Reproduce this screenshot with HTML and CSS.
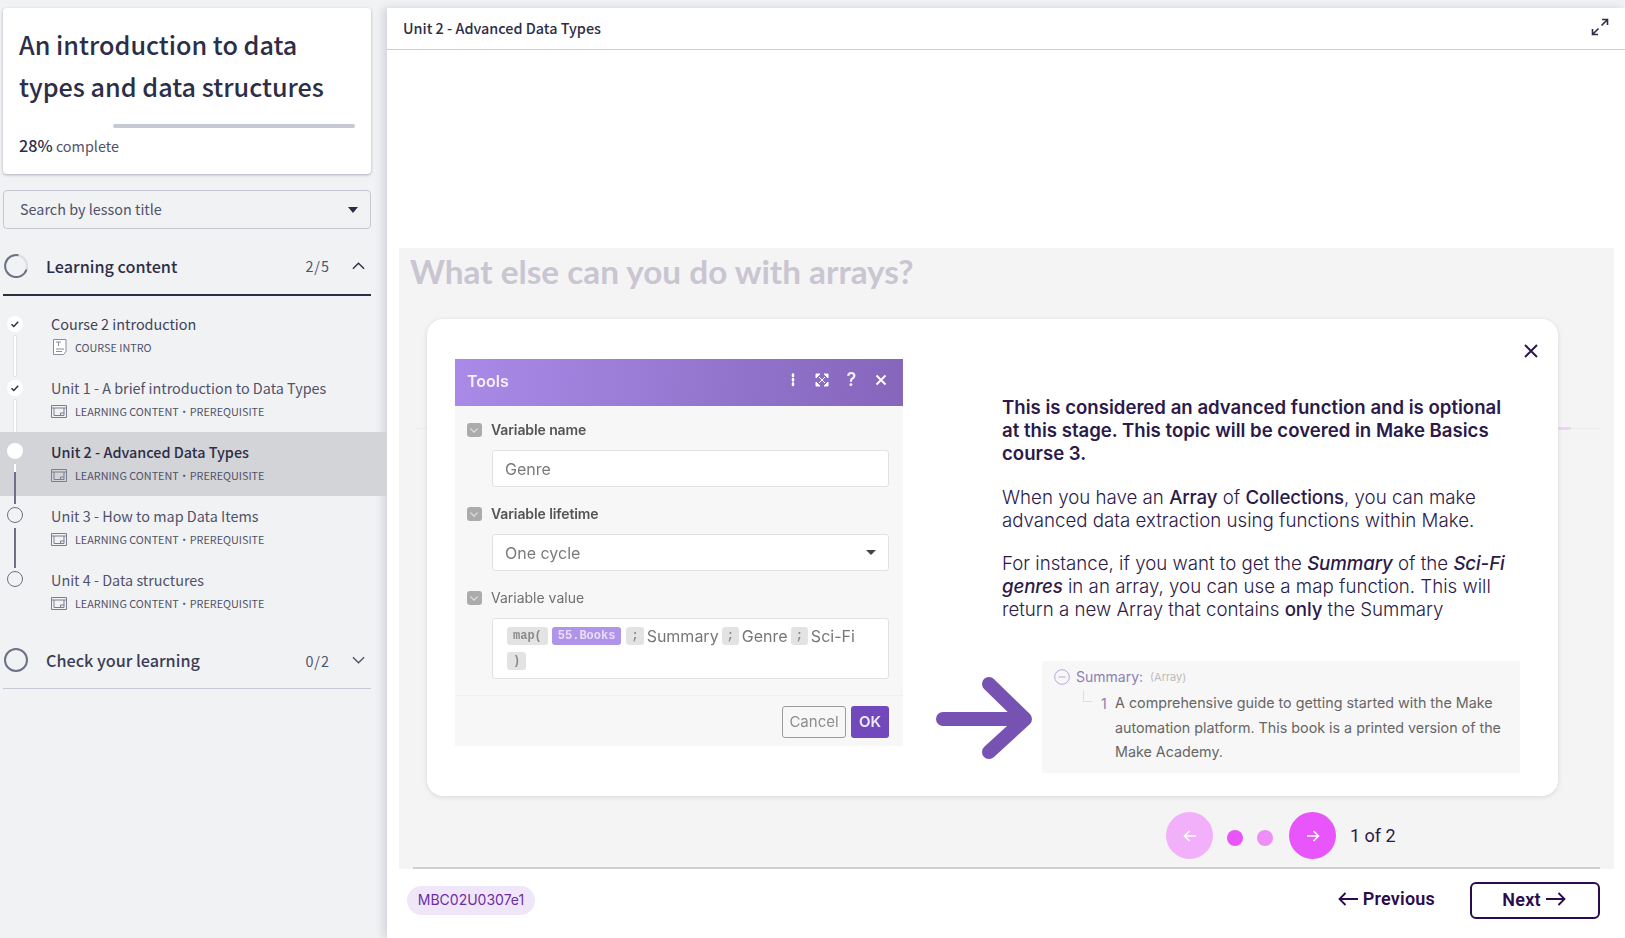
FILE: index.html
```html
<!DOCTYPE html>
<html lang="en">
<head>
<meta charset="utf-8">
<title>Unit 2 - Advanced Data Types</title>
<link rel="stylesheet" href="styles.css">
</head>
<body>
<aside class="sidebar">
  <section class="course-card">
    <h1 class="course-title">An introduction to data types and data structures</h1>
    <div class="progress"><span class="progress-bar"></span></div>
    <p class="progress-text"><span class="progress-num">28%</span> complete</p>
  </section>
  <div class="search"><span>Search by lesson title</span><span class="caret"></span></div>

  <div class="section-head open">
    <svg class="ring" viewBox="0 0 24 24"><circle cx="12" cy="12" r="11" fill="none" stroke="#dcdde3" stroke-width="2"/><path d="M14.5 1.3A11 11 0 1 0 22.6 15.5" fill="none" stroke="#6e7087" stroke-width="2"/></svg>
    <span class="section-name">Learning content</span>
    <span class="section-count">2/5</span>
    <svg class="chev" viewBox="0 0 14 8"><path d="M1 7l6-6 6 6" fill="none" stroke="#2c2e47" stroke-width="1.5"/></svg>
  </div>

  <ul class="lessons">
    <li class="lesson done">
      <span class="marker"><svg viewBox="0 0 16 16"><path d="M4.5 8.3l2.3 2.2 4.400-4.800" fill="none" stroke="#2c2e47" stroke-width="1.5"/></svg></span>
      <span class="link"></span>
      <div class="lesson-title first">Course 2 introduction</div>
      <div class="lesson-meta">
        <svg class="doc-icon" viewBox="0 0 14 16"><path d="M.5.5h12.500v12l-2.500 3H.5z" fill="#fff" stroke="#8a8ca0"/><path d="M3 3h5M5.500 3v4M3 10h8M3 12.500h6" stroke="#8a8ca0" fill="none"/></svg>
        <span>COURSE INTRO</span>
      </div>
    </li>
    <li class="lesson done">
      <span class="marker"><svg viewBox="0 0 16 16"><path d="M4.500 8.300l2.300 2.200 4.400-4.800" fill="none" stroke="#2c2e47" stroke-width="1.500"/></svg></span>
      <span class="link"></span>
      <div class="lesson-title">Unit 1 - A brief introduction to Data Types</div>
      <div class="lesson-meta">
        <svg class="screen-icon" viewBox="0 0 16 13"><path d="M.5.5h15v12H.5zM.5 3h15M3 3v7.500h10V3M9.500 10.500V8h3.500" fill="none" stroke="#7b7d92"/></svg>
        <span>LEARNING CONTENT</span><span class="sep">·</span><span>PREREQUISITE</span>
      </div>
    </li>
    <li class="lesson current">
      <span class="marker filled"></span>
      <span class="link half"></span>
      <div class="lesson-title">Unit 2 - Advanced Data Types</div>
      <div class="lesson-meta">
        <svg class="screen-icon" viewBox="0 0 16 13"><path d="M.5.5h15v12H.5zM.5 3h15M3 3v7.500h10V3M9.500 10.500V8h3.500" fill="none" stroke="#7b7d92"/></svg>
        <span>LEARNING CONTENT</span><span class="sep">·</span><span>PREREQUISITE</span>
      </div>
    </li>
    <li class="lesson">
      <span class="marker empty"></span>
      <span class="link dark"></span>
      <div class="lesson-title">Unit 3 - How to map Data Items</div>
      <div class="lesson-meta">
        <svg class="screen-icon" viewBox="0 0 16 13"><path d="M.5.5h15v12H.5zM.5 3h15M3 3v7.500h10V3M9.500 10.500V8h3.500" fill="none" stroke="#7b7d92"/></svg>
        <span>LEARNING CONTENT</span><span class="sep">·</span><span>PREREQUISITE</span>
      </div>
    </li>
    <li class="lesson">
      <span class="marker empty"></span>
      <div class="lesson-title">Unit 4 - Data structures</div>
      <div class="lesson-meta">
        <svg class="screen-icon" viewBox="0 0 16 13"><path d="M.5.5h15v12H.5zM.5 3h15M3 3v7.500h10V3M9.500 10.500V8h3.500" fill="none" stroke="#7b7d92"/></svg>
        <span>LEARNING CONTENT</span><span class="sep">·</span><span>PREREQUISITE</span>
      </div>
    </li>
  </ul>

  <div class="section-head closed">
    <svg class="ring" viewBox="0 0 24 24"><circle cx="12" cy="12" r="11" fill="none" stroke="#6e7087" stroke-width="2"/></svg>
    <span class="section-name">Check your learning</span>
    <span class="section-count">0/2</span>
    <svg class="chev" viewBox="0 0 14 8"><path d="M1 1l6 6 6-6" fill="none" stroke="#50526b" stroke-width="1.500"/></svg>
  </div>
</aside>

<main class="main">
  <header class="main-head">
    <span class="main-title">Unit 2 - Advanced Data Types</span>
    <svg class="expand" viewBox="0 0 18 18"><path d="M11 1.500h5.500V7M16.500 1.500L10.500 7.500M7 16.500H1.500V11M1.500 16.500L7.500 10.500" fill="none" stroke="#2c2e47" stroke-width="1.600"/></svg>
  </header>
  <div class="blank"></div>
  <section class="stage">
    <span class="ghost-line"><span class="ghost-fill"></span></span>
    <h2 class="stage-title">What else can you do with arrays?</h2>
    <div class="modal">
      <svg class="close" viewBox="0 0 14 14"><path d="M1 1l12 12M13 1L1 13" fill="none" stroke="#2b1a4a" stroke-width="2"/></svg>

      <div class="tools">
        <div class="tools-head">
          <span>Tools</span>
          <span class="tools-actions">
            <svg viewBox="0 0 14 14"><path d="M7 1.500v1.500M7 6v1.500M7 10.500V12" stroke="#fff" stroke-width="2.500" stroke-linecap="round"/></svg>
            <svg viewBox="0 0 14 14"><path d="M1 1h4L1 5zM13 1v4L9 1zM1 13V9l4 4zM13 13H9l4-4zM4 4l6 6M10 4l-6 6" fill="#fff" stroke="#fff"/></svg>
            <span class="q">?</span>
            <svg viewBox="0 0 14 14"><path d="M2.500 2.500l9 9M11.500 2.500l-9 9" stroke="#fff" stroke-width="1.800"/></svg>
          </span>
        </div>
        <div class="tools-body">
          <div class="field">
            <div class="field-label strong"><span class="tick"></span>Variable name</div>
            <div class="input">Genre</div>
          </div>
          <div class="field">
            <div class="field-label strong"><span class="tick"></span>Variable lifetime</div>
            <div class="input select">One cycle<span class="mini-caret"></span></div>
          </div>
          <div class="field">
            <div class="field-label"><span class="tick"></span>Variable value</div>
            <div class="input value">
              <span class="chip code">map(</span><span class="chip code purple">55.Books</span><span class="chip code semi">;</span><span class="val">Summary</span><span class="chip code semi">;</span><span class="val">Genre</span><span class="chip code semi">;</span><span class="val">Sci-Fi</span><span class="chip code">)</span>
            </div>
          </div>
        </div>
        <div class="tools-foot">
          <span class="btn-cancel">Cancel</span><span class="btn-ok">OK</span>
        </div>
      </div>

      <div class="right">
        <div class="note">
          <p class="lead">This is considered an advanced function and is optional at this stage. This topic will be covered in Make Basics course 3.</p>
          <p>When you have an <b>Array</b> of <b>Collections</b>, you can make advanced data extraction using functions within Make.</p>
          <p>For instance, if you want to get the <b><i>Summary</i></b> of the <b><i><span class="nobreak">Sci-Fi</span> genres</i></b> in an array, you can use a map function. This will return a new Array that contains <b>only</b> the Summary</p>
        </div>
        <div class="result">
          <svg class="big-arrow" viewBox="0 0 97 82"><path d="M7 42h80M53 7l36 35-36 33" fill="none" stroke="#7652b3" stroke-width="14" stroke-linecap="round" stroke-linejoin="round"/></svg>
          <div class="summary">
            <div class="sum-head">
              <svg class="sum-icon" viewBox="0 0 16 16"><circle cx="8" cy="8" r="7.300" fill="none" stroke="#b6a6e0"/><path d="M4.500 8h7" stroke="#b6a6e0"/></svg>
              <span class="sum-key">Summary:</span><span class="sum-type">(Array)</span>
            </div>
            <div class="sum-row">
              <span class="sum-idx">1</span>
              <span class="sum-text">A comprehensive guide to getting started with the Make automation platform. This book is a printed version of the Make Academy.</span>
            </div>
          </div>
        </div>
      </div>
    </div>

    <nav class="pager">
      <span class="round prev"><svg viewBox="0 0 14 14"><path d="M13 7H1.500M6.500 2L1.500 7l5 5" fill="none" stroke="#fff" stroke-width="1.600"/></svg></span>
      <span class="dot on"></span>
      <span class="dot"></span>
      <span class="round next"><svg viewBox="0 0 14 14"><path d="M1 7h11.500M7.500 2l5 5-5 5" fill="none" stroke="#fff" stroke-width="1.600"/></svg></span>
      <span class="pager-text">1 of 2</span>
    </nav>
  </section>
  <footer class="main-foot">
    <span class="pill">MBC02U0307e1</span>
    <span class="prev-link"><svg class="nav-arrow" viewBox="0 0 20 14"><path d="M20 7H1.500M7.500 1L1.500 7l6 6" fill="none" stroke="#2b0a4d" stroke-width="1.800"/></svg>Previous</span>
    <span class="next-btn">Next<svg class="nav-arrow" viewBox="0 0 20 14"><path d="M0 7h18.500M12.500 1l6 6-6 6" fill="none" stroke="#2b0a4d" stroke-width="1.800"/></svg></span>
  </footer>
</main>
</body>
</html>
```

FILE: styles.css
```css
* { box-sizing: border-box; }
html, body { margin: 0; height: 938px; overflow: hidden; }
body {
  display: flex;
  background: #f1f2f4;
  font-family: "Noto Sans CJK SC", "Noto Sans", sans-serif;
  color: #2c2e47;
}

/* Sidebar */
.sidebar { width: 387px; flex: none; padding: 8px 16px 0 3px; }
.course-card {
  height: 166px;
  background: #fff;
  border-radius: 4px;
  box-shadow: 0 1px 3px rgba(44, 46, 71, .35);
  padding: 15px 16px 0 16px;
}
.course-title {
  margin: 0;
  font-size: 25.200px;
  line-height: 42px;
  font-weight: 500;
  color: #2c2e47;
}
.progress { margin-top: 17px; height: 4px; padding-left: 94px; }
.progress-bar { display: block; height: 4px; background: #c6c8d4; border-radius: 2px; }
.progress-text { margin: 5px 0 0; font-size: 14.400px; line-height: 24px; color: #50526b; }
.progress-num { font-size: 16.200px; font-weight: 500; color: #2c2e47; }

.search {
  margin-top: 16px;
  height: 39px;
  border: 1px solid #c6c8d2;
  border-radius: 4px;
  padding: 0 12px 2px 16px;
  display: flex;
  align-items: center;
  justify-content: space-between;
  font-size: 14.400px;
  color: #50526b;
}
.caret { width: 0; height: 0; border: 5px solid transparent; border-top: 6px solid #2c2e47; border-bottom: 0; margin-top: 2px; }

.section-head {
  display: flex;
  align-items: center;
  padding: 8px 6px 0 0;
  border-bottom: 1px solid #c6c8d2;
}
.section-head.open { height: 67px; border-bottom: 2px solid #2c2e47; }
.section-head.closed { height: 65px; }
.ring { width: 24px; height: 24px; flex: none; margin-left: 1px; }
.section-name { margin-left: 18px; font-size: 16.200px; font-weight: 500; flex: 1; color: #2c2e47; }
.closed .section-name { color: #3b3d56; }
.section-count { font-size: 14.400px; color: #50526b; letter-spacing: 1px; margin-right: 22px; }
.chev { width: 13px; height: 8px; flex: none; }

.lessons { list-style: none; margin: 8px 0 0; padding: 0; }
.lesson { position: relative; height: 64px; padding: 9px 0 0 51px; margin-right: -16px; margin-left: -3px; }
.lesson.current { background: #d3d4d8; z-index: 2; }
.lesson-title { font-size: 14.400px; line-height: 22px; color: #50526b; }
.lesson-title.first { color: #3f415a; }
.current .lesson-title { font-weight: 500; color: #2c2e47; }
.lesson-meta { display: flex; align-items: center; margin-top: 3px; height: 18px; font-size: 10.800px; color: #50526b; }
.doc-icon { width: 14px; height: 16px; margin-right: 8px; margin-left: 2px; flex: none; }
.screen-icon { width: 16px; height: 13px; margin-right: 8px; flex: none; }
.sep { width: 11px; text-align: center; overflow: hidden; }
.marker {
  position: absolute;
  left: 7px;
  top: 12px;
  width: 16px;
  height: 16px;
  border-radius: 50%;
  background: #fff;
}
.current .marker, .lesson.current ~ .lesson .marker { top: 11px; }
.marker svg { display: block; width: 16px; height: 16px; }
.marker.empty { background: transparent; border: 1px solid #6e7087; }
.link { position: absolute; left: 14px; top: 32px; width: 2px; height: 40px; background: #fff; box-shadow: 0 0 0 .5px #d5d6dc; z-index: 1; }
.link.half { background: linear-gradient(#fff 0 8px, #6e7087 8px); box-shadow: none; }
.link.dark { background: #6e7087; box-shadow: none; }

/* Main */
.main {
  flex: 1;
  margin-top: 8px;
  background: #fff;
  box-shadow: -4px 0 8px rgba(44, 46, 71, .14);
  display: flex;
  flex-direction: column;
  min-width: 0;
}
.main-head {
  height: 42px;
  flex: none;
  border-bottom: 1px solid #cfd0d6;
  padding: 0 16px 3px 16px;
  display: flex;
  align-items: center;
  justify-content: space-between;
}
.main-title { font-size: 14.400px; font-weight: 500; color: #2c2e47; }
.expand { width: 18px; height: 18px; }
.blank { height: 198px; flex: none; }
.stage {
  position: relative;
  height: 621px;
  flex: none;
  margin: 0 11px 0 12px;
  background: #f4f4f4;
}
.ghost-line { position: absolute; left: 16px; right: 14px; top: 180px; height: 1px; background: #ececec; }
.ghost-fill { position: absolute; right: 29px; top: -1px; width: 14px; height: 3px; background: #eed6f2; }
.stage-title {
  position: relative;
  margin: 0;
  padding: 2px 0 0 11px;
  height: 71px;
  font-family: "Lato", sans-serif;
  font-size: 33.300px;
  line-height: 42px;
  font-weight: 700;
  color: #c9c5d1;
}
.modal {
  position: relative;
  margin-left: 28px;
  width: 1131px;
  height: 477px;
  background: #fff;
  border-radius: 16px;
  box-shadow: 0 1px 5px rgba(0, 0, 0, .12);
  display: flex;
  align-items: flex-start;
  padding: 40px 0 0 28px;
  font-family: "Inter", sans-serif;
}
.close { position: absolute; right: 20px; top: 25px; width: 14px; height: 14px; }

/* Tools picture */
.tools { width: 448px; height: 387px; flex: none; background: #f7f7f7; filter: blur(.4px); }
.tools-head {
  height: 47px;
  background: linear-gradient(95deg, #a98ae8, #8566bb);
  color: #f4effc;
  font-size: 16px;
  font-weight: 600;
  display: flex;
  align-items: center;
  justify-content: space-between;
  padding: 0 15px 4px 12px;
}
.tools-actions { display: flex; align-items: center; gap: 15.500px; margin-top: -2px; }
.tools-actions svg { width: 14px; height: 14px; }
.q { font-size: 18px; line-height: 14px; width: 14px; text-align: center; }
.tools-body { padding: 13px 14px 0 13px; height: 290px; border-bottom: 1px solid #f0f0f0; }
.field { margin-bottom: 16px; }
.field-label {
  display: flex;
  align-items: center;
  height: 20px;
  font-size: 14px;
  color: #6f6f6f;
  margin-bottom: 11px;
}
.field-label.strong { font-weight: 600; color: #555; letter-spacing: -.1px; }
.tick {
  width: 15px;
  height: 14px;
  margin: 2px 9px 0 -1px;
  border-radius: 3px;
  background: #ababab;
  position: relative;
}
.tick::after {
  content: "";
  position: absolute;
  left: 4px;
  top: 3px;
  width: 5px;
  height: 5px;
  border-right: 1.500px solid #eee;
  border-bottom: 1.500px solid #eee;
  transform: rotate(45deg) scale(.9);
}
.input {
  margin-left: 24px;
  height: 37px;
  background: #fff;
  border: 1px solid #e2e2e2;
  border-radius: 3px;
  padding: 0 12px;
  display: flex;
  align-items: center;
  font-size: 16px;
  color: #7a7a7a;
}
.select { justify-content: space-between; }
.mini-caret { width: 0; height: 0; border: 5px solid transparent; border-top: 5px solid #444; border-bottom: 0; }
.input.value {
  height: 61px;
  padding: 8px 13px 0 14px;
  flex-wrap: wrap;
  align-content: flex-start;
  column-gap: 3px;
  row-gap: 7px;
}
.chip {
  height: 18px;
  border-radius: 3px;
  background: #e3e3e3;
  padding: 0 6px;
  font-size: 12px;
  line-height: 18px;
  color: #8a8a8a;
}
.chip.semi { padding: 0 5px; }
.code { font-family: "Liberation Mono", monospace; font-weight: 700; }
.chip.purple { background: #b094ea; color: #e8ddfb; padding: 0 6px; margin: 0 2px 0 1px; }
.val { line-height: 18px; font-size: 16px; color: #777; }
.tools-foot { display: flex; justify-content: flex-end; gap: 5px; padding: 10px 14px 0 0; }
.btn-cancel {
  width: 64px;
  height: 32px;
  border: 1px solid #9b9b9b;
  border-radius: 3px;
  text-align: center;
  font-size: 15px;
  line-height: 30px;
  color: #8d8d8d;
}
.btn-ok {
  width: 38px;
  height: 32px;
  border-radius: 3px;
  background: #7248bd;
  color: #efe9fa;
  text-align: center;
  font-size: 15px;
  font-weight: 600;
  line-height: 32px;
}

/* Right column of the modal */
.right { flex: 1; min-width: 0; padding-top: 37px; }
.note { margin-left: 99px; width: 512px; font-size: 18.700px; line-height: 22.800px; font-weight: 300; color: #2b1a4a; }
.note p { margin: 0 0 20.500px; }
.note p:last-child { margin-bottom: 0; }
.note b { font-weight: 500; letter-spacing: -.12px; }
.note .lead { font-weight: 600; font-size: 18.600px; margin-bottom: 23px; }
.nobreak { white-space: nowrap; }
.result { display: flex; align-items: center; margin-top: 39px; margin-left: 33px; }
.big-arrow { width: 97px; height: 82px; flex: none; margin-top: 3px; }
.summary {
  margin-left: 9px;
  width: 478px;
  height: 112px;
  background: #f7f7f7;
  padding: 7px 12px 0 12px;
  color: #666;
}
.sum-head { display: flex; align-items: center; height: 18px; }
.sum-icon { width: 16px; height: 16px; margin-right: 6px; }
.sum-key { font-size: 14px; color: #8a80b5; margin-right: 7px; }
.sum-type { font-size: 11px; color: #bbb; }
.sum-row { position: relative; display: flex; margin-top: 5px; padding-left: 47px; }
.sum-row::before {
  content: "";
  position: absolute;
  left: 29px;
  top: -1px;
  width: 8px;
  height: 11px;
  border-left: 1px solid #dedede;
  border-bottom: 1px solid #dedede;
}
.sum-idx { width: 14px; flex: none; font-size: 14px; line-height: 25px; color: #8a80b5; }
.sum-text { font-size: 14.300px; line-height: 24.700px; }

/* Pager */
.pager { display: flex; align-items: center; margin-top: 16px; padding-left: 767px; }
.round {
  width: 47px;
  height: 47px;
  border-radius: 50%;
  display: flex;
  align-items: center;
  justify-content: center;
}
.round svg { width: 14px; height: 14px; }
.prev { background: #f2b0fa; }
.next { background: #e855fb; }
.dot { width: 16px; height: 16px; border-radius: 50%; background: #ee8ef8; margin-top: 4px; }
.dot.on { background: #e855fb; margin: 4px 14px 0 14px; }
.dot:not(.on) { margin-right: 16px; }
.pager-text { margin-left: 14px; font-family: "Roboto", sans-serif; font-size: 18px; font-weight: 400; color: #2b1a4a; }

/* Footer */
.main-foot {
  position: relative;
  flex: 1;
  display: flex;
  align-items: center;
  padding: 0 25px 6px 20px;
  font-family: "Roboto", sans-serif;
  font-size: 18px;
  font-weight: 600;
  letter-spacing: .2px;
  color: #2b0a4d;
}
.main-foot::before {
  content: "";
  position: absolute;
  left: 26px;
  right: 25px;
  top: -2px;
  height: 2px;
  background: #d2cdd2;
}
.pill {
  height: 29px;
  width: 128px;
  border-radius: 15px;
  background: #f0e6fa;
  color: #6d2ca8;
  font-family: "Inter", sans-serif;
  font-size: 14px;
  font-weight: 400;
  letter-spacing: 0;
  line-height: 28px;
  text-align: center;
}
.prev-link { margin-left: auto; display: flex; align-items: center; gap: 5px; padding-bottom: 4px; }
.next-btn {
  margin-left: 35px;
  width: 130px;
  height: 37px;
  border: 2px solid #2b0a4d;
  border-radius: 6px;
  display: flex;
  align-items: center;
  justify-content: center;
  gap: 5px;
  padding: 0 2px 3px 0;
}
.nav-arrow { width: 20px; height: 14px; }
```
